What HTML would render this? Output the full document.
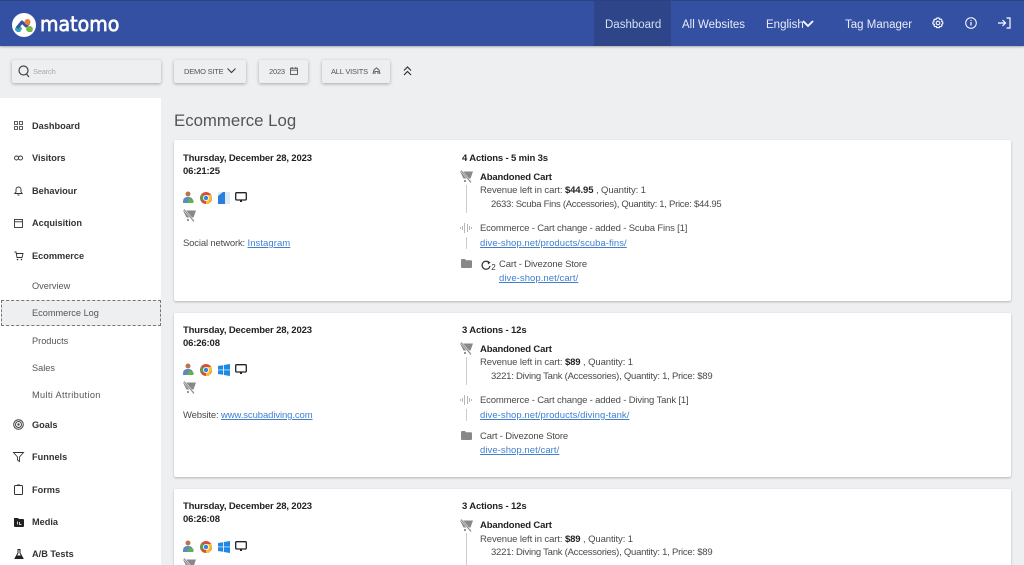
<!DOCTYPE html>
<html><head><meta charset="utf-8"><style>
*{box-sizing:border-box}
html,body{margin:0;padding:0;width:1024px;height:565px;overflow:hidden;background:#eeeff1;font-family:"Liberation Sans",sans-serif;color:#444}
#w{position:relative;width:1024px;height:565px;overflow:hidden;background:#eeeff1}
.t{position:absolute;white-space:nowrap;font-size:9.5px;line-height:12px;color:#4a4a4a;margin-top:1px;letter-spacing:-.16px}
.b{font-weight:bold;color:#222;letter-spacing:-.15px}
a{color:#3f7fd0;text-decoration:underline;letter-spacing:.06px}
.abs{position:absolute}
.nav{position:absolute;left:0;top:0;width:1024px;height:46px;background:#3450a3;border-top:1px solid #2c4180;box-shadow:0 1px 2px rgba(0,0,0,.3)}
.n{position:absolute;top:18px;font-size:11.5px;line-height:14px;color:#e8ecf7;white-space:nowrap}
.btn{position:absolute;top:60px;height:23px;background:#eeeff1;box-shadow:0 1px 3px rgba(0,0,0,.3);border-radius:2px;font-size:7.5px;line-height:23px;color:#555;white-space:nowrap;letter-spacing:-.2px}
.side{position:absolute;left:0;top:98px;width:161px;height:467px;background:#fff}
.m{position:absolute;left:32px;font-size:9.2px;line-height:12px;font-weight:bold;color:#333;white-space:nowrap}
.s{position:absolute;left:32px;font-size:9.2px;line-height:12px;color:#555;white-space:nowrap}
.card{position:absolute;left:174px;width:837px;background:#fff;box-shadow:0 1px 2px rgba(0,0,0,.25);border-radius:2px}
svg{position:absolute;overflow:visible}
.vl{position:absolute;left:466px;width:1px;background:#ccc}
</style></head><body><div id="w">
<div class="nav"></div>
<div class="abs" style="left:594px;top:1px;width:77px;height:45px;background:#2e4689"></div>
<svg style="left:12px;top:13px" width="24" height="24" viewBox="0 0 24 24"><circle cx="12" cy="12" r="12" fill="#fff"/><path d="M3 17a3.400 3.400 0 0 1 7-1l-2 3H5z" fill="#35a6b8"/><path d="M14 17a3.400 3.400 0 0 1 7-1l-1 3h-4z" fill="#79b943"/><path d="M5 15l5-6 4 4 3-3" stroke="#3450a3" stroke-width="3" fill="none" stroke-linejoin="round"/><circle cx="15.500" cy="9" r="3" fill="#e8803c"/></svg>
<div class="abs" style="left:40px;top:11px;font-size:20px;line-height:26px;font-family:'DejaVu Sans',sans-serif;color:#fff;-webkit-text-stroke:.7px #fff;transform-origin:0 0;transform:scaleX(.95)">matomo</div>
<div class="n" style="left:605px;color:#cfe0f5">Dashboard</div>
<div class="n" style="left:682px">All Websites</div>
<div class="n" style="left:766px">English</div>
<svg style="left:802px;top:20px" width="12" height="8" viewBox="0 0 12 8"><path d="M1 1l5 5 5-5" stroke="#fff" stroke-width="1.800" fill="none"/></svg>
<div class="n" style="left:845px">Tag Manager</div>
<svg style="left:932px;top:17px" width="12" height="12" viewBox="0 0 12 12"><circle cx="6" cy="6" r="1.800" fill="none" stroke="#fff" stroke-width="1.100"/><path d="M6 .8l1.300.4.400 1.200 1.300-.3 1 1-.4 1.300 1.200.6v1.800l-1.200.6.400 1.300-1 1-1.300-.3-.400 1.200-2.600 0-.4-1.200-1.300.3-1-1 .4-1.300L.9 6.900V5.100l1.200-.6-.4-1.300 1-1 1.300.3.400-1.200z" fill="none" stroke="#fff" stroke-width="1.100"/></svg>
<svg style="left:965px;top:17px" width="12" height="12" viewBox="0 0 12 12"><circle cx="6" cy="6" r="5.300" fill="none" stroke="#fff" stroke-width="1"/><path d="M6 5v3.500M6 3v1" stroke="#fff" stroke-width="1.200"/></svg>
<svg style="left:998px;top:17px" width="13" height="12" viewBox="0 0 13 12"><path d="M0 6h7M4.500 3l3 3-3 3" stroke="#fff" stroke-width="1.200" fill="none"/><path d="M8.500 1H12v10H8.500" stroke="#fff" stroke-width="1.200" fill="none"/></svg>

<div class="btn" style="left:12px;width:149px;color:#aaa;padding-left:21px">Search</div>
<svg style="left:18px;top:65px" width="12" height="13" viewBox="0 0 12 13"><circle cx="5.500" cy="5.500" r="4.500" fill="none" stroke="#444" stroke-width="1.200"/><path d="M8.500 9l2.500 3" stroke="#444" stroke-width="1.200"/></svg>
<div class="btn" style="left:174px;width:72px;padding-left:10px">DEMO SITE</div>
<svg style="left:227px;top:68px" width="9" height="6" viewBox="0 0 9 6"><path d="M.5.500l4 4 4-4" stroke="#444" stroke-width="1.200" fill="none"/></svg>
<div class="btn" style="left:259px;width:49px;padding-left:10px">2023</div>
<svg style="left:290px;top:67px" width="8" height="8" viewBox="0 0 8 8"><rect x=".5" y="1.200" width="7" height="6.300" fill="none" stroke="#555" stroke-width=".9"/><path d="M.5 3.200h7M2.200 0v2M5.800 0v2" stroke="#555" stroke-width=".9"/></svg>
<div class="btn" style="left:322px;width:68px;padding-left:9px">ALL VISITS</div>
<svg style="left:372px;top:67px" width="9" height="8" viewBox="0 0 9 8"><path d="M1 7l1-4 2.500-2L7 3l1 4M3 7V4.500h3V7" fill="none" stroke="#666" stroke-width="1.100"/></svg>
<svg style="left:403px;top:66px" width="9" height="10" viewBox="0 0 9 10"><path d="M1 4.500l3.500-3.500L8 4.500M1 9l3.500-3.500L8 9" stroke="#333" stroke-width="1.200" fill="none"/></svg>

<div class="side"></div>
<div class="abs" style="left:1px;top:300px;width:160px;height:26px;background:#eeeff1;border:1px dashed #777"></div>
<div class="m" style="top:120px">Dashboard</div>
<div class="m" style="top:152px">Visitors</div>
<div class="m" style="top:185px">Behaviour</div>
<div class="m" style="top:217px">Acquisition</div>
<div class="m" style="top:250px">Ecommerce</div>
<div class="s" style="top:280px">Overview</div>
<div class="s" style="top:307px">Ecommerce Log</div>
<div class="s" style="top:335px">Products</div>
<div class="s" style="top:362px">Sales</div>
<div class="s" style="top:389px;letter-spacing:.35px">Multi Attribution</div>
<div class="m" style="top:419px">Goals</div>
<div class="m" style="top:451px">Funnels</div>
<div class="m" style="top:484px">Forms</div>
<div class="m" style="top:516px">Media</div>
<div class="m" style="top:548px">A/B Tests</div>
<svg style="left:14px;top:121px" width="9" height="9" viewBox="0 0 9 9"><path d="M.5.500h3v3h-3zM5.500.500h3v3h-3zM.5 5.500h3v3h-3zM5.500 5.500h3v3h-3z" fill="none" stroke="#333" stroke-width=".8"/></svg>
<svg style="left:14px;top:155px" width="9" height="6" viewBox="0 0 9 6"><circle cx="2.500" cy="3" r="2" fill="none" stroke="#333" stroke-width=".9"/><circle cx="6.500" cy="3" r="2" fill="none" stroke="#333" stroke-width=".9"/></svg>
<svg style="left:14px;top:186px" width="9" height="10" viewBox="0 0 9 10"><path d="M.8 7.500h7.400L7 6V3.500a2.500 2.500 0 0 0-5 0V6zM3.500 9h2" fill="none" stroke="#333" stroke-width=".9"/></svg>
<svg style="left:14px;top:219px" width="9" height="9" viewBox="0 0 9 9"><rect x=".5" y=".5" width="8" height="8" fill="none" stroke="#333" stroke-width=".9"/><path d="M.5 2.800h8" stroke="#333" stroke-width=".9"/></svg>
<svg style="left:14px;top:251px" width="10" height="10" viewBox="0 0 10 10"><path d="M.5 1h1.500l1 5.500h5L9 2.500H2.500" fill="none" stroke="#333" stroke-width=".9"/><circle cx="3.500" cy="8.500" r=".8" fill="#333"/><circle cx="7.500" cy="8.500" r=".8" fill="#333"/></svg>
<svg style="left:13px;top:419px" width="11" height="11" viewBox="0 0 11 11"><circle cx="5.500" cy="5.500" r="4.800" fill="none" stroke="#444" stroke-width="1"/><circle cx="5.500" cy="5.500" r="3" fill="none" stroke="#444" stroke-width="1"/><circle cx="5.500" cy="5.500" r="1.200" fill="#444"/></svg>
<svg style="left:13px;top:452px" width="11" height="10" viewBox="0 0 11 10"><path d="M.5.500h10L6.500 5v4.500L4.500 8V5z" fill="none" stroke="#333" stroke-width=".9"/></svg>
<svg style="left:14px;top:484px" width="9" height="11" viewBox="0 0 9 11"><rect x=".5" y="1.500" width="8" height="9" rx="1" fill="none" stroke="#333" stroke-width="1"/><rect x="3" y=".5" width="3" height="1.500" fill="#333"/></svg>
<svg style="left:14px;top:517px" width="10" height="10" viewBox="0 0 10 10"><path d="M0 1h4l1 1h4a1 1 0 0 1 1 1v6a1 1 0 0 1-1 1H1a1 1 0 0 1-1-1z" fill="#222"/><path d="M3.500 4.500v3M5.500 5v2.500h2" stroke="#fff" stroke-width=".8" fill="none"/></svg>
<svg style="left:14px;top:549px" width="10" height="10" viewBox="0 0 10 10"><path d="M3.500.5h3M4 .5V4L1 9.500h8L6 4V.5" fill="none" stroke="#222"/><path d="M2.500 6.500h5l1.500 3H1z" fill="#222"/></svg>

<div class="abs" style="left:174px;top:111px;font-size:16.800px;line-height:20px;color:#555">Ecommerce Log</div>
<div class="card" style="top:140px;height:161px"></div>
<div class="card" style="top:313px;height:164px"></div>
<div class="card" style="top:489px;height:90px"></div>

<div class="t b" style="left:183px;top:152px">Thursday, December 28, 2023</div>
<div class="t b" style="left:183px;top:165px">06:21:25</div>
<svg style="left:183px;top:191px" width="11" height="13" viewBox="0 0 11 13"><circle cx="5" cy="3" r="2.500" fill="#b8764a"/><path d="M0 11c0-4 2-5 5-5s4 1 5 3v3H0z" fill="#5a8ac0"/><path d="M4 12l2-5 5 3-1 2z" fill="#6aae4a"/></svg>
<svg style="left:200px;top:192px" width="12" height="12" viewBox="0 0 12 12"><circle cx="6" cy="6" r="6" fill="#dd4b3e"/><path d="M6 6L.8 9 .4 4.500 2 2z" fill="#4aa853"/><path d="M6 3h5.500l.5 3-3 6H6z" fill="#f4c430"/><circle cx="6" cy="6" r="3" fill="#fff"/><circle cx="6" cy="6" r="2.200" fill="#3b82e0"/></svg>
<svg style="left:218px;top:192px" width="12" height="12" viewBox="0 0 12 12"><rect width="12" height="12" fill="#dfeaf5"/><path d="M0 4l5-4h2v12H0z" fill="#2a7fdc"/></svg>
<svg style="left:235px;top:192px" width="12" height="11" viewBox="0 0 12 11"><rect x=".7" y=".7" width="10.600" height="7.300" rx="1" fill="none" stroke="#222" stroke-width="1.300"/><rect x="5" y="8" width="2" height="2" fill="#222"/></svg>
<svg style="left:183px;top:209px" width="13" height="13" viewBox="0 0 13 13"><path d="M0 1.500h13l-2.500 7h-7z" fill="#888"/><circle cx="5" cy="11" r="1.100" fill="#888"/><circle cx="10" cy="11" r="1.100" fill="#888"/><path d="M1 .5l10 12" stroke="#fff" stroke-width="2"/><path d="M1 .5l10 12" stroke="#888" stroke-width="1"/></svg>
<div class="t" style="left:183px;top:237px">Social network: <a>Instagram</a></div>

<div class="t b" style="left:462px;top:152px">4 Actions - 5 min 3s</div>
<svg style="left:460px;top:170px" width="13" height="13" viewBox="0 0 13 13"><path d="M0 1.500h13l-2.500 7h-7z" fill="#888"/><circle cx="5" cy="11" r="1.100" fill="#888"/><circle cx="10" cy="11" r="1.100" fill="#888"/><path d="M1 .5l10 12" stroke="#fff" stroke-width="2"/><path d="M1 .5l10 12" stroke="#888" stroke-width="1"/></svg>
<div class="vl" style="top:185px;height:28px"></div>
<div class="t b" style="left:480px;top:171px">Abandoned Cart</div>
<div class="t" style="left:480px;top:184px;letter-spacing:-.1px">Revenue left in cart: <b style="color:#222">$44.95</b> , Quantity: 1</div>
<div class="t" style="left:491px;top:198px;letter-spacing:-.28px">2633: Scuba Fins (Accessories), Quantity: 1, Price: $44.95</div>
<svg style="left:460px;top:222px" width="12" height="12" viewBox="0 0 12 12"><path d="M.5 5v2M2.500 4v4M4.500 1v10M7.500 2v8M9.500 4v4M11.500 5v2" stroke="#999" stroke-width=".7"/></svg>
<div class="vl" style="top:237px;height:12px"></div>
<div class="t" style="left:480px;top:222px">Ecommerce - Cart change - added - Scuba Fins [1]</div>
<div class="t" style="left:480px;top:237px"><a>dive-shop.net/products/scuba-fins/</a></div>
<svg style="left:461px;top:259px" width="11" height="9" viewBox="0 0 11 9"><path d="M0 1a1 1 0 0 1 1-1h3l1 1.300h5a1 1 0 0 1 1 1V8a1 1 0 0 1-1 1H1a1 1 0 0 1-1-1z" fill="#888"/></svg>
<svg style="left:481px;top:260px" width="15" height="11" viewBox="0 0 15 11"><path d="M8 2.500A4 4 0 1 0 9 6" fill="none" stroke="#333" stroke-width="1.200"/><path d="M6.500 .5L9.500 2.500 7 4.500z" fill="#333"/><text x="10.300" y="10" font-size="8" fill="#333" font-family="Liberation Sans">2</text></svg>
<div class="t" style="left:499px;top:258px">Cart - Divezone Store</div>
<div class="t" style="left:499px;top:272px"><a>dive-shop.net/cart/</a></div>

<div class="t b" style="left:183px;top:324px">Thursday, December 28, 2023</div>
<div class="t b" style="left:183px;top:337px">06:26:08</div>
<svg style="left:183px;top:363px" width="11" height="13" viewBox="0 0 11 13"><circle cx="5" cy="3" r="2.500" fill="#b8764a"/><path d="M0 11c0-4 2-5 5-5s4 1 5 3v3H0z" fill="#5a8ac0"/><path d="M4 12l2-5 5 3-1 2z" fill="#6aae4a"/></svg>
<svg style="left:200px;top:364px" width="12" height="12" viewBox="0 0 12 12"><circle cx="6" cy="6" r="6" fill="#dd4b3e"/><path d="M6 6L.8 9 .4 4.500 2 2z" fill="#4aa853"/><path d="M6 3h5.500l.5 3-3 6H6z" fill="#f4c430"/><circle cx="6" cy="6" r="3" fill="#fff"/><circle cx="6" cy="6" r="2.200" fill="#3b82e0"/></svg>
<svg style="left:218px;top:364px" width="12" height="12" viewBox="0 0 12 12"><path d="M0 2l5-.8v4.400H0zM5.800 1l6.200-1v5.600H5.800zM0 6.300h5v4.400L0 10zM5.800 6.300H12V12l-6.200-1z" fill="#1e88e5"/></svg>
<svg style="left:235px;top:364px" width="12" height="11" viewBox="0 0 12 11"><rect x=".7" y=".7" width="10.600" height="7.300" rx="1" fill="none" stroke="#222" stroke-width="1.300"/><rect x="5" y="8" width="2" height="2" fill="#222"/></svg>
<svg style="left:183px;top:381px" width="13" height="13" viewBox="0 0 13 13"><path d="M0 1.500h13l-2.500 7h-7z" fill="#888"/><circle cx="5" cy="11" r="1.100" fill="#888"/><circle cx="10" cy="11" r="1.100" fill="#888"/><path d="M1 .5l10 12" stroke="#fff" stroke-width="2"/><path d="M1 .5l10 12" stroke="#888" stroke-width="1"/></svg>
<div class="t" style="left:183px;top:409px">Website: <a style="letter-spacing:-.1px">www.scubadiving.com</a></div>

<div class="t b" style="left:462px;top:324px">3 Actions - 12s</div>
<svg style="left:460px;top:342px" width="13" height="13" viewBox="0 0 13 13"><path d="M0 1.500h13l-2.500 7h-7z" fill="#888"/><circle cx="5" cy="11" r="1.100" fill="#888"/><circle cx="10" cy="11" r="1.100" fill="#888"/><path d="M1 .5l10 12" stroke="#fff" stroke-width="2"/><path d="M1 .5l10 12" stroke="#888" stroke-width="1"/></svg>
<div class="vl" style="top:357px;height:28px"></div>
<div class="t b" style="left:480px;top:343px">Abandoned Cart</div>
<div class="t" style="left:480px;top:356px;letter-spacing:-.1px">Revenue left in cart: <b style="color:#222">$89</b> , Quantity: 1</div>
<div class="t" style="left:491px;top:370px;letter-spacing:-.24px">3221: Diving Tank (Accessories), Quantity: 1, Price: $89</div>
<svg style="left:460px;top:394px" width="12" height="12" viewBox="0 0 12 12"><path d="M.5 5v2M2.500 4v4M4.500 1v10M7.500 2v8M9.500 4v4M11.500 5v2" stroke="#999" stroke-width=".7"/></svg>
<div class="vl" style="top:409px;height:12px"></div>
<div class="t" style="left:480px;top:394px">Ecommerce - Cart change - added - Diving Tank [1]</div>
<div class="t" style="left:480px;top:409px"><a>dive-shop.net/products/diving-tank/</a></div>
<svg style="left:461px;top:431px" width="11" height="9" viewBox="0 0 11 9"><path d="M0 1a1 1 0 0 1 1-1h3l1 1.300h5a1 1 0 0 1 1 1V8a1 1 0 0 1-1 1H1a1 1 0 0 1-1-1z" fill="#888"/></svg>
<div class="t" style="left:480px;top:430px">Cart - Divezone Store</div>
<div class="t" style="left:480px;top:444px"><a>dive-shop.net/cart/</a></div>

<div class="t b" style="left:183px;top:500px">Thursday, December 28, 2023</div>
<div class="t b" style="left:183px;top:513px">06:26:08</div>
<svg style="left:183px;top:540px" width="11" height="13" viewBox="0 0 11 13"><circle cx="5" cy="3" r="2.500" fill="#b8764a"/><path d="M0 11c0-4 2-5 5-5s4 1 5 3v3H0z" fill="#5a8ac0"/><path d="M4 12l2-5 5 3-1 2z" fill="#6aae4a"/></svg>
<svg style="left:200px;top:541px" width="12" height="12" viewBox="0 0 12 12"><circle cx="6" cy="6" r="6" fill="#dd4b3e"/><path d="M6 6L.8 9 .4 4.500 2 2z" fill="#4aa853"/><path d="M6 3h5.500l.5 3-3 6H6z" fill="#f4c430"/><circle cx="6" cy="6" r="3" fill="#fff"/><circle cx="6" cy="6" r="2.200" fill="#3b82e0"/></svg>
<svg style="left:218px;top:541px" width="12" height="12" viewBox="0 0 12 12"><path d="M0 2l5-.8v4.400H0zM5.800 1l6.200-1v5.600H5.800zM0 6.300h5v4.400L0 10zM5.800 6.300H12V12l-6.200-1z" fill="#1e88e5"/></svg>
<svg style="left:235px;top:541px" width="12" height="11" viewBox="0 0 12 11"><rect x=".7" y=".7" width="10.600" height="7.300" rx="1" fill="none" stroke="#222" stroke-width="1.300"/><rect x="5" y="8" width="2" height="2" fill="#222"/></svg>
<svg style="left:183px;top:558px" width="13" height="13" viewBox="0 0 13 13"><path d="M0 1.500h13l-2.500 7h-7z" fill="#888"/><path d="M1 .5l10 12" stroke="#fff" stroke-width="2"/><path d="M1 .5l10 12" stroke="#888" stroke-width="1"/></svg>

<div class="t b" style="left:462px;top:500px">3 Actions - 12s</div>
<svg style="left:460px;top:519px" width="13" height="13" viewBox="0 0 13 13"><path d="M0 1.500h13l-2.500 7h-7z" fill="#888"/><circle cx="5" cy="11" r="1.100" fill="#888"/><circle cx="10" cy="11" r="1.100" fill="#888"/><path d="M1 .5l10 12" stroke="#fff" stroke-width="2"/><path d="M1 .5l10 12" stroke="#888" stroke-width="1"/></svg>
<div class="vl" style="top:533px;height:32px"></div>
<div class="t b" style="left:480px;top:519px">Abandoned Cart</div>
<div class="t" style="left:480px;top:533px;letter-spacing:-.1px">Revenue left in cart: <b style="color:#222">$89</b> , Quantity: 1</div>
<div class="t" style="left:491px;top:546px;letter-spacing:-.24px">3221: Diving Tank (Accessories), Quantity: 1, Price: $89</div>
</div></body></html>
